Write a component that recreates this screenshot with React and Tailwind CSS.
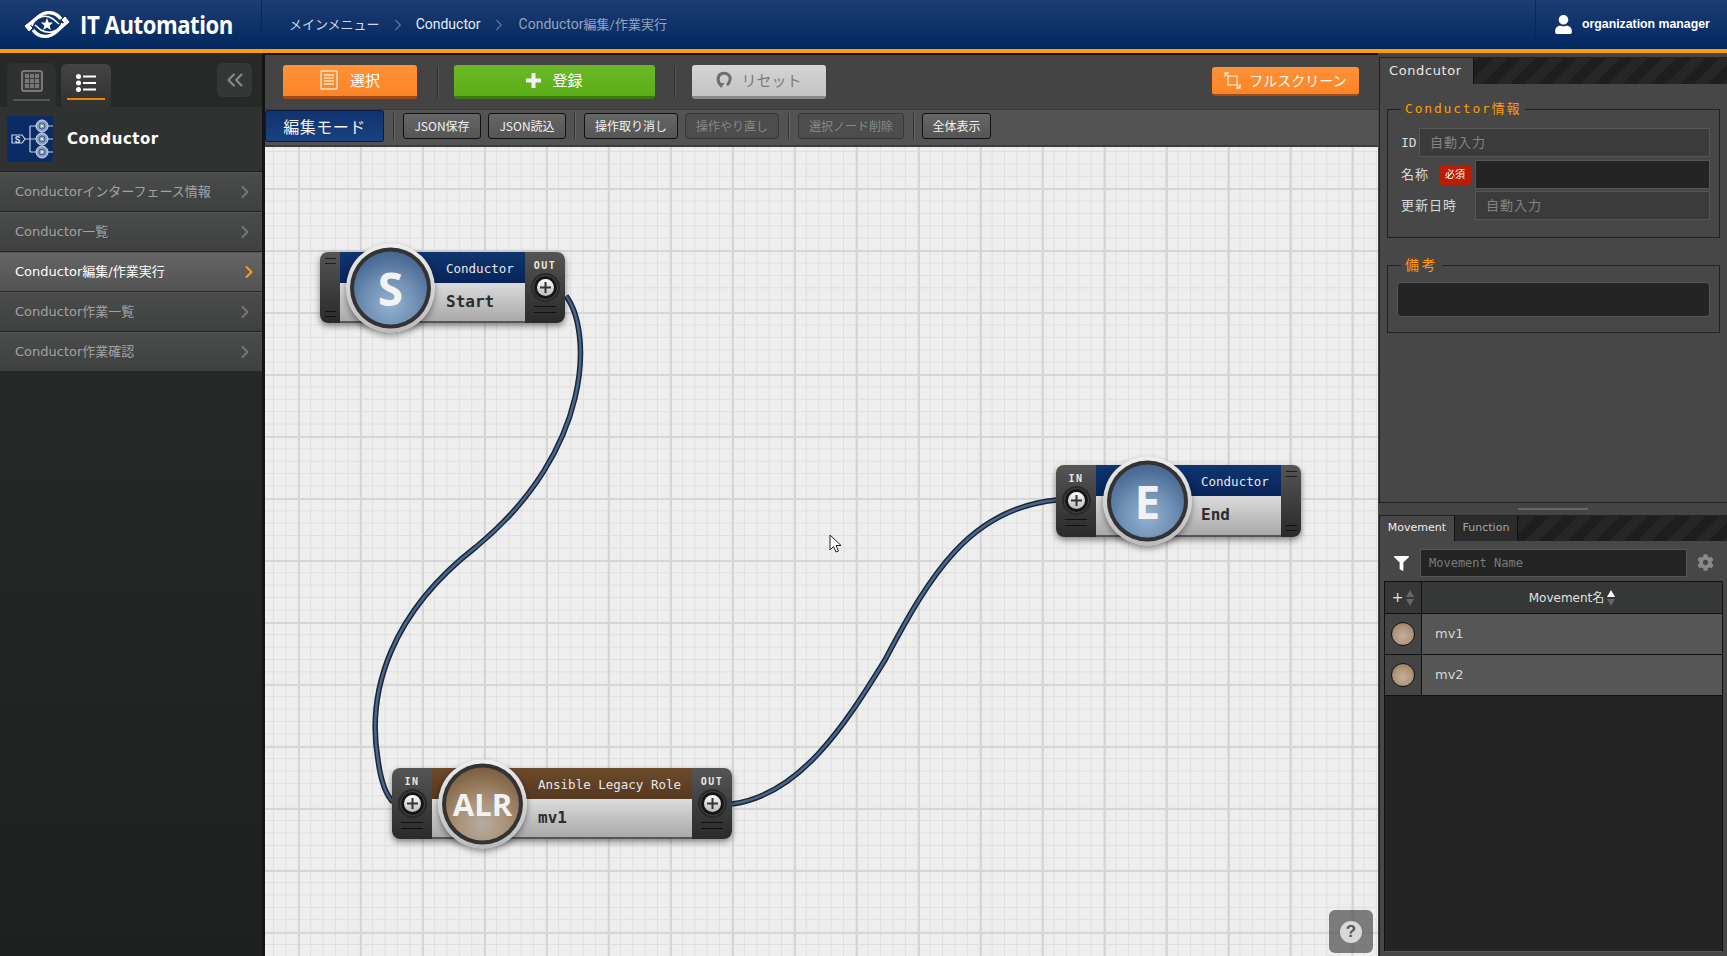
import { ChevronRight, ChevronsLeft } from 'lucide-react';
import { FaCog, FaFilter, FaUser } from 'react-icons/fa';

const sideMenu = [
  { label: 'Conductorインターフェース情報' },
  { label: 'Conductor一覧' },
  { label: 'Conductor編集/作業実行', active: true },
  { label: 'Conductor作業一覧' },
  { label: 'Conductor作業確認' },
];

function Logo() {
  return (
    <svg width="48" height="29" viewBox="0 0 48 29" fill="none" stroke="#fff" className="shrink-0">
      <path d="M3 17 L15 7 C23 0 33 2 38 9" strokeWidth="3.4" />
      <path d="M45 11 L33 22 C25 29 15 27 10 20" strokeWidth="3.4" />
      <path d="M9 16 C11 8 22 3 30 9 L36 14" strokeWidth="1.6" />
      <path d="M39 13 C37 21 26 25 18 20 L12 15" strokeWidth="1.6" />
      <path d="M2 16 L6 21 L9 18 L5 14 Z M46 12 L42 7 L39 10 L43 14 Z" fill="#fff" strokeWidth="1" />
      <polygon points="24,8 25.7,12.4 30,12.6 26.7,15.4 27.8,20 24,17.4 20.2,20 21.3,15.4 18,12.6 22.3,12.4" fill="#fff" stroke="none" />
    </svg>
  );
}

function ConductorIcon() {
  return (
    <svg width="46" height="46" viewBox="0 0 46 46" className="shrink-0">
      <rect width="46" height="46" fill="#0a2b66" />
      <g fill="none" stroke="#c6d3e4" strokeWidth="1.2">
        <path d="M5 19 h10 l3 4 l-3 4 h-10 z" />
        <path d="M18 23 h16 M23 10 v26 M23 10 h8 M23 36 h8 M40 10 h6 M40 23 h6 M40 36 h6" />
      </g>
      <text x="10.5" y="26.5" fontSize="9" fontWeight="700" fill="#dbe4f0" textAnchor="middle" fontFamily="Roboto, sans-serif">S</text>
      {[10, 23, 36].map((y) => (
        <g key={y}>
          <circle cx="35" cy={y} r="6" fill="#8ea3bf" stroke="#d5deea" strokeWidth="1" />
          <circle cx="35" cy={y} r="3" fill="none" stroke="#3e5a85" strokeWidth="1" />
          <circle cx="35" cy={y} r="1" fill="#fff" />
        </g>
      ))}
    </svg>
  );
}

function Sidebar() {
  return (
    <aside className="w-[262px] shrink-0 flex flex-col bg-gradient-to-b from-[#2b2c2c] to-[#1e1f1f]">
      <div className="h-[54px] relative flex items-end pl-[7px] gap-[5px] bg-[#272828]">
        <div className="w-[49px] h-[44px] rounded-t-md bg-[#2f3030] flex flex-col items-center pt-[7px]">
          <div className="w-[22px] h-[22px] rounded-[3px] border-2 border-[#777] bg-[#3c3c3c] grid grid-cols-3 gap-px p-[2px]">
            {[...Array(9)].map((_, i) => (
              <span key={i} className="bg-[#777]" />
            ))}
          </div>
          <div className="w-[37px] h-[2px] bg-[#555] mt-[7px]" />
        </div>
        <div className="w-[50px] h-[43px] rounded-t-md bg-gradient-to-b from-[#444] to-[#303131] flex flex-col items-center pt-[10px]">
          <svg width="20" height="18" viewBox="0 0 20 18" fill="#fff">
            <circle cx="2.5" cy="2.5" r="2.5" />
            <circle cx="2.5" cy="9" r="2.5" />
            <circle cx="2.5" cy="15.5" r="2.5" />
            <rect x="7" y="1.5" width="13" height="2" />
            <rect x="7" y="8" width="13" height="2" />
            <rect x="7" y="14.5" width="13" height="2" />
          </svg>
          <div className="w-[38px] h-[2px] bg-[#f08300] mt-[6px]" />
        </div>
        <div className="absolute left-[217px] top-[10px] w-[35px] h-[34px] rounded-md bg-[#353636] flex items-center justify-center">
          <ChevronsLeft className="w-[26px] h-[26px] text-[#8a8a8a]" strokeWidth={2} />
        </div>
      </div>
      <div className="h-[65px] flex items-center pl-[7px] gap-[14px] bg-[#303131] border-b border-[#1d1d1d]">
        <ConductorIcon />
        <span className="font-['DejaVu_Sans'] font-bold text-[15px] tracking-[0.5px] text-white">Conductor</span>
      </div>
      {sideMenu.map((m) => (
        <div
          key={m.label}
          className={`h-[40px] shrink-0 flex items-center justify-between pl-[15px] pr-[7px] border-b border-t border-b-[#262626] border-t-[#555] font-['DejaVu_Sans','Noto_Sans_CJK_JP',sans-serif] text-[13px] ${
            m.active
              ? 'bg-gradient-to-b from-[#666566] to-[#525252] text-white'
              : 'bg-gradient-to-b from-[#4a4b4b] to-[#3f4040] text-[#a3a3a3]'
          }`}
        >
          {m.label}
          <ChevronRight
            className={m.active ? 'w-[20px] h-[20px] -mr-[4px] text-[#ff9a1e]' : 'w-[20px] h-[20px] text-[#777]'}
            strokeWidth={2.4}
          />
        </div>
      ))}
    </aside>
  );
}

function ToolSep() {
  return <div className="w-px h-[32px] bg-[#2e2e2e] border-r border-[#555] box-content" />;
}

function SmallSep() {
  return <div className="w-px h-[26px] bg-[#333] border-r border-[#666] box-content" />;
}

function SmallBtn({ width, disabled, children }) {
  return (
    <button
      className={`${width} h-[26px] shrink-0 rounded-[3px] text-[12px] border ${
        disabled
          ? 'border-[#383838] bg-[#4d4d4d] text-[#888]'
          : 'border-[#111] bg-gradient-to-b from-[#666] to-[#555] text-[#f2f2f2]'
      }`}
    >
      {children}
    </button>
  );
}

function Toolbars() {
  return (
    <div className="font-['Noto_Sans_CJK_JP',sans-serif]">
      <div className="h-[54px] bg-[#444] flex items-center pl-[18px] pr-[19px] pb-px">
        <button className="w-[134px] h-[34px] rounded-[3px] bg-gradient-to-b from-[#ff9136] to-[#fb8526] border-b-[3px] border-[#a04c18] flex items-center justify-center gap-[12px] text-white text-[15px]">
          <svg width="18" height="20" viewBox="0 0 18 20" fill="none" stroke="#ffe6cf" strokeWidth="1.4">
            <rect x="1" y="1" width="16" height="18" rx="1" />
            <path d="M4 5 h10 M4 8 h10 M4 11 h10 M4 14 h10" />
          </svg>
          選択
        </button>
        <div className="ml-[20px] mr-[15px]"><ToolSep /></div>
        <button className="w-[201px] h-[34px] rounded-[3px] bg-gradient-to-b from-[#6bb826] to-[#5bae18] border-b-[3px] border-[#3b7a10] flex items-center justify-center gap-[11px] text-white text-[15px]">
          <svg width="15" height="15" viewBox="0 0 15 15" fill="#f2f2f2">
            <path d="M5.5 0h4v5.500H15v4H9.500V15h-4V9.500H0v-4h5.500z" />
          </svg>
          登録
        </button>
        <div className="ml-[19px] mr-[16px]"><ToolSep /></div>
        <button className="w-[134px] h-[34px] rounded-[3px] bg-gradient-to-b from-[#d4d4d4] to-[#c4c4c4] border-b-[3px] border-[#8a8a8a] flex items-center justify-center gap-[9px] text-[#7b7b7b] text-[15px]">
          <svg width="16" height="18" viewBox="0 0 16 18" fill="none" stroke="#6e6e6e" strokeWidth="3">
            <path d="M5 14 C1 11 1 4 6 2.5 C11 1 15 5 14 9 C13.5 11.5 12.5 13 11 14" />
            <path d="M1.5 12 h7 l-3.5 5z" fill="#6e6e6e" stroke="none" />
          </svg>
          リセット
        </button>
        <button className="ml-auto w-[147px] h-[29px] rounded-[3px] bg-gradient-to-b from-[#ff9136] to-[#fb8526] border-b-[2px] border-[#a04c18] flex items-center justify-center gap-[8px] text-white text-[14px]">
          <svg width="17" height="17" viewBox="0 0 17 17" fill="none" stroke="#ffe6cf" strokeWidth="1.3">
            <rect x="4" y="4" width="9" height="9" />
            <path d="M1 5 V1 H5 M1 1 L4 4 M16 12 V16 H12 M16 16 L13 13" />
          </svg>
          フルスクリーン
        </button>
      </div>
      <div className="h-[38px] bg-[#535353] border-t border-[#3a3a3a] border-b-2 border-b-[#3c3c3c] pb-[4px] flex items-center gap-[7px]">
        <div className="w-[119px] h-[32px] ml-0 rounded-[2px] border border-[#0b1c3d] bg-gradient-to-b from-[#0f336d] to-[#1a4280] text-[#f3f3f3] text-[16px] flex items-center justify-center tracking-[0.5px]">
          編集モード
        </div>
        <div className="ml-[2px] mr-px"><SmallSep /></div>
        <SmallBtn width="w-[78px]">JSON保存</SmallBtn>
        <SmallBtn width="w-[78px]">JSON読込</SmallBtn>
        <div className="mx-px"><SmallSep /></div>
        <SmallBtn width="w-[94px]">操作取り消し</SmallBtn>
        <SmallBtn width="w-[94px]" disabled>操作やり直し</SmallBtn>
        <div className="ml-[2px] mr-px"><SmallSep /></div>
        <SmallBtn width="w-[106px]" disabled>選択ノード削除</SmallBtn>
        <div className="ml-[2px]"><SmallSep /></div>
        <SmallBtn width="w-[69px]">全体表示</SmallBtn>
      </div>
    </div>
  );
}

function Terminal({ label }) {
  return (
    <div className="flex flex-col items-center">
      <span className="font-['DejaVu_Sans_Mono'] font-bold text-[10px] leading-[12px] tracking-[1.5px] text-[#f0e6d8] mb-[3px]">{label}</span>
      <div className="w-[25px] h-[25px] rounded-full bg-[#161616] border border-[#484848] shadow-[0_0_0_2px_#2a2a2a] flex items-center justify-center">
        <div className="w-[17px] h-[17px] rounded-full bg-gradient-to-b from-[#fff] to-[#bbb] flex items-center justify-center">
          <svg width="11" height="11" viewBox="0 0 11 11" fill="#333">
            <path d="M4.5 0h2v4.500h4.500v2H6.500V11h-2V6.500H0v-2h4.500z" />
          </svg>
        </div>
      </div>
      <div className="w-[22px] h-px bg-[#111] mt-[6px]" />
      <div className="w-[22px] h-px bg-[#111] mt-[5px]" />
    </div>
  );
}

function BlankCap({ side }) {
  return (
    <div className={`w-[20px] h-full bg-gradient-to-b from-[#555] to-[#2a2a2a] flex flex-col justify-between items-center py-[6px] ${side === 'left' ? 'rounded-l-lg' : 'rounded-r-lg'}`}>
      <div className="flex flex-col gap-[4px]">
        <div className="w-[11px] h-px bg-[#1c1c1c]" />
        <div className="w-[11px] h-px bg-[#1c1c1c]" />
      </div>
      <div className="flex flex-col gap-[4px]">
        <div className="w-[11px] h-px bg-[#111]" />
        <div className="w-[11px] h-px bg-[#111]" />
      </div>
    </div>
  );
}

function TermCap({ label, side }) {
  return (
    <div className={`w-[40px] h-full pt-[8px] bg-gradient-to-b from-[#555] to-[#2a2a2a] flex justify-center ${side === 'left' ? 'rounded-l-lg' : 'rounded-r-lg'}`}>
      <Terminal label={label} />
    </div>
  );
}

function Badge({ kind, text, bubbleLeft }) {
  const inner = kind === 'blue'
    ? 'bg-[radial-gradient(circle_at_50%_72%,#93b3d4_0%,#7090b4_40%,#4f7099_70%,#3a5a85_100%)]'
    : 'bg-[radial-gradient(circle_at_50%_78%,#b5aca0_0%,#ab9379_35%,#8c6f51_68%,#6a4c30_100%)]';
  return (
    <div
      className="absolute top-1/2 -translate-y-1/2 w-[89px] h-[89px] rounded-full bg-gradient-to-b from-[#eee] to-[#bbb] p-[4px] shadow-[0_3px_6px_rgba(0,0,0,0.4)]"
      style={{ left: bubbleLeft }}
    >
      <div className="w-full h-full rounded-full bg-[#333] p-[4px]">
        <div className={`w-full h-full rounded-full ${inner} flex items-center justify-center font-['Open_Sans'] font-bold text-[#f2f2f2] ${text.length > 1 ? 'text-[31px]' : 'text-[46px]'}`}>
          {text}
        </div>
      </div>
    </div>
  );
}

function Node({ left, top, width, height, head, title, name, text, bubbleLeft, textLeft, leftCap, rightCap }) {
  return (
    <div
      className="absolute flex rounded-lg shadow-[0_3px_6px_rgba(0,0,0,0.45)]"
      style={{ left, top, width, height }}
    >
      {leftCap}
      <div className="flex-1 flex flex-col font-['DejaVu_Sans_Mono']">
        <div className={`h-[31px] shrink-0 flex items-center pt-[3px] text-[12.500px] text-[#e8e8e8] ${head}`} style={{ paddingLeft: textLeft }}>
          {title}
        </div>
        <div className="flex-1 flex items-center pb-px bg-gradient-to-b from-[#dcdcdc] to-[#a9a9a9] border-b-2 border-[#555] text-[16px] font-bold text-[#2c2c2c]" style={{ paddingLeft: textLeft }}>
          {name}
        </div>
      </div>
      {rightCap}
      <Badge kind={head.includes('#5') ? 'brown' : 'blue'} text={text} bubbleLeft={bubbleLeft} />
    </div>
  );
}

function Canvas() {
  return (
    <div className="relative flex-1 overflow-hidden bg-[#eeeeee] bg-[image:linear-gradient(to_right,#d6d6d6_2px,transparent_2px),linear-gradient(to_bottom,#d6d6d6_2px,transparent_2px),linear-gradient(to_right,#dfdfdf_1px,transparent_1px),linear-gradient(to_bottom,#dfdfdf_1px,transparent_1px)] bg-[size:62px_62px,62px_62px,12.4px_12.4px,12.4px_12.4px] bg-[position:33px_0,0_41px,8px_0,0_4px]">
      <svg className="absolute left-0 top-0" width="1113" height="809" viewBox="265 147 1113 809" fill="none">
        {[
          'M566 296 C592 330 594 450 476 547 C392 612 366 690 378 760 C381 782 386 795 393 802',
          'M732 804 C800 795 845 725 885 660 C930 575 970 508 1057 500',
        ].map((d) => (
          <g key={d}>
            <path d={d} stroke="#1b2636" strokeWidth="5.500" />
            <path d={d} stroke="#47678f" strokeWidth="2.500" />
          </g>
        ))}
      </svg>

      <Node
        left={55}
        top={105}
        width={245}
        height={71}
        head="bg-gradient-to-b from-[#11356f] to-[#072459]"
        title="Conductor"
        name="Start"
        text="S"
        bubbleLeft={26}
        textLeft={106}
        leftCap={<BlankCap side="left" />}
        rightCap={<TermCap label="OUT" side="right" />}
      />
      <Node
        left={791}
        top={318}
        width={245}
        height={72}
        head="bg-gradient-to-b from-[#11356f] to-[#072459]"
        title="Conductor"
        name="End"
        text="E"
        bubbleLeft={47}
        textLeft={105}
        leftCap={<TermCap label="IN" side="left" />}
        rightCap={<BlankCap side="right" />}
      />
      <Node
        left={127}
        top={621}
        width={340}
        height={71}
        head="bg-gradient-to-b from-[#6d4a2b] to-[#553820]"
        title="Ansible Legacy Role"
        name="mv1"
        text="ALR"
        bubbleLeft={46}
        textLeft={106}
        leftCap={<TermCap label="IN" side="left" />}
        rightCap={<TermCap label="OUT" side="right" />}
      />

      <svg className="absolute left-[564px] top-[387px]" width="14" height="20" viewBox="0 0 14 20">
        <path d="M1 1 L1 16 L4.500 12.500 L7 18 L9.500 17 L7 11.500 L12 11.500 Z" fill="#fff" stroke="#222" strokeWidth="1" />
      </svg>

      <div className="absolute left-[1064px] top-[763px] w-[44px] h-[43px] rounded-md bg-[#555]/75 flex items-center justify-center">
        <div className="w-[22px] h-[22px] rounded-full bg-[#d8d8d8] flex items-center justify-center font-['Liberation_Sans'] font-bold text-[17px] text-[#555]">?</div>
      </div>
    </div>
  );
}

function TabStrip({ height, children }) {
  return (
    <div className={`${height} shrink-0 flex bg-[#222] bg-[image:repeating-linear-gradient(135deg,#262626_0,#262626_10px,#1e1e1e_10px,#1e1e1e_20px)]`}>
      {children}
    </div>
  );
}

function FieldInput({ placeholder }) {
  return (
    <input
      readOnly
      placeholder={placeholder}
      className="h-[29px] min-w-0 flex-1 px-[10px] text-[13px] tracking-[1px] border border-[#555] bg-[#3b3b3b] placeholder:text-[#848484] outline-none"
    />
  );
}

function ConductorPanel() {
  return (
    <div className="h-[445px] shrink-0 flex flex-col bg-[#474747] border-t border-l border-[#222] ml-px mt-[4px]">
      <TabStrip height="h-[26px]">
        <div className="w-[94px] bg-[#474747] text-[#e8e8e8] text-[13px] font-['DejaVu_Sans'] flex items-center pl-[9px] tracking-[0.6px] border-r border-[#111]">
          Condcutor
        </div>
      </TabStrip>
      <div className="pl-[7px] pr-[7px] font-['DejaVu_Sans_Mono','Noto_Sans_CJK_JP',monospace] text-[#dadada] text-[13px]">
        <fieldset className="border border-[#222] mt-[15px] h-[139px] pl-[13px] pr-[9px]">
          <legend className="px-[4px] text-[#ff9d00] text-[13px] tracking-[1.8px] leading-[20px]">Conductor情報</legend>
          <div className="flex items-center mt-[9px] gap-[5px]">
            <span className="w-[13px]">ID</span>
            <FieldInput placeholder="自動入力" />
          </div>
          <div className="flex items-center mt-[3px] h-[29px]">
            <span className="w-[38px] tracking-[1px]">名称</span>
            <span className="w-[32px] h-[20px] rounded-[3px] bg-[#b81d05] text-white text-[10px] flex items-center justify-center">必須</span>
            <input readOnly className="ml-[4px] min-w-0 flex-1 h-[29px] border border-[#555] bg-[#232423] outline-none" />
          </div>
          <div className="flex items-center mt-[2px]">
            <span className="w-[74px] shrink-0 tracking-[1px]">更新日時</span>
            <FieldInput placeholder="自動入力" />
          </div>
        </fieldset>
        <fieldset className="border border-[#222] mt-[17px] h-[78px] px-[9px]">
          <legend className="ml-[4px] px-[4px] text-[#ff9d00] text-[14px] tracking-[2.5px] leading-[20px]">備考</legend>
          <div className="h-[35px] mt-[7px] rounded-[4px] border border-[#555] bg-[#232423]" />
        </fieldset>
      </div>
    </div>
  );
}

function SortArrows({ up }) {
  return (
    <svg width="8" height="16" viewBox="0 0 8 16" className="shrink-0">
      <path d="M4 0 L8 7 H0 Z" fill={up ? '#fff' : '#666'} />
      <path d="M4 16 L8 9 H0 Z" fill="#666" />
    </svg>
  );
}

function MovementRow({ name }) {
  return (
    <div className="h-[41px] flex border-b border-[#111] text-[#d6d6d6] text-[13px] font-['DejaVu_Sans']">
      <div className="w-[37px] shrink-0 bg-[#444] border-r border-[#111] flex items-center justify-center">
        <div className="w-[24px] h-[24px] rounded-full border border-[#111] bg-[radial-gradient(circle_at_50%_60%,#c0b0a0_0%,#ae9378_55%,#8a6d50_100%)]" />
      </div>
      <div className="flex-1 flex items-center pl-[13px] bg-[#565656]">{name}</div>
    </div>
  );
}

function MovementPanel() {
  return (
    <div className="flex-1 min-h-0 flex flex-col bg-[#474747] border-t border-l border-[#222] ml-px">
      <TabStrip height="h-[25px]">
        <div className="w-[74px] bg-[#474747] text-[#eee] text-[11px] font-['DejaVu_Sans'] flex items-center justify-center">Movement</div>
        <div className="w-[64px] bg-[#2b2b2b] text-[#a5a5a5] text-[11px] font-['DejaVu_Sans'] flex items-center justify-center border-x border-[#111]">Function</div>
      </TabStrip>
      <div className="h-[40px] shrink-0 flex items-start pt-[8px] pl-[14px] pr-[8px]">
        <FaFilter className="w-[15px] h-[15px] mt-[7px] text-white mr-[11px]" />
        <input
          readOnly
          placeholder="Movement Name"
          className="w-[267px] h-[28px] px-[8px] border border-[#555] bg-[#232423] font-['DejaVu_Sans_Mono'] text-[12px] placeholder:text-[#7b7b7b] outline-none"
        />
        <FaCog className="ml-[10px] mt-[5px] w-[17px] h-[17px] text-[#8a8a8a]" />
      </div>
      <div className="flex-1 min-h-0 mx-[4px] mb-[4px] border border-[#111] border-b-[#555] bg-[#232423] flex flex-col">
        <div className="h-[32px] shrink-0 flex border-b border-[#111] bg-[#363737] text-[#e2e2e2] text-[12px] font-['DejaVu_Sans','Noto_Sans_CJK_JP',sans-serif]">
          <div className="w-[37px] shrink-0 border-r border-[#111] flex items-center justify-center gap-[3px] text-[14px]">
            + <SortArrows />
          </div>
          <div className="flex-1 flex items-center justify-center gap-[3px]">
            Movement名 <SortArrows up />
          </div>
        </div>
        <MovementRow name="mv1" />
        <MovementRow name="mv2" />
      </div>
    </div>
  );
}

export default function App() {
  return (
    <div className="w-[1727px] h-[956px] overflow-hidden flex flex-col bg-[#141414] font-['Roboto','Noto_Sans_CJK_JP',sans-serif]">
      <header className="h-[53px] shrink-0 flex items-stretch border-b-4 border-[#ff9d00] bg-gradient-to-b from-[#1c3d73] to-[#022760] text-white">
        <div className="w-[262px] shrink-0 border-r border-[#0c2750] flex items-center pl-[23px] gap-[9px]">
          <Logo />
          <span className="font-['Open_Sans'] font-bold text-[25px] tracking-[-0.5px] origin-left scale-x-[0.885] whitespace-nowrap">IT Automation</span>
        </div>
        <nav className="flex-1 flex items-center pl-[27px] text-[14px]">
          <span className="text-[13px] text-[#d5dce8]">メインメニュー</span>
          <ChevronRight className="w-[18px] h-[18px] mx-[9px] text-[#5c7699]" strokeWidth={1.6} />
          <span className="text-[#e8edf4]">Conductor</span>
          <ChevronRight className="w-[18px] h-[18px] ml-[9px] mr-[11px] text-[#5c7699]" strokeWidth={1.6} />
          <span className="text-[#93a5bf]">Conductor<span className="text-[13px]">編集/作業実行</span></span>
        </nav>
        <div className="w-[192px] shrink-0 border-l border-[#0c2750] flex items-center pl-[18px] gap-[9px]">
          <FaUser className="w-[19px] h-[19px]" />
          <span className="font-['Liberation_Sans'] font-bold text-[12.300px]">organization manager</span>
        </div>
      </header>
      <div className="flex-1 min-h-0 flex">
        <Sidebar />
        <main className="w-[1113px] shrink-0 ml-[3px] mt-[2px] flex flex-col min-h-0">
          <Toolbars />
          <Canvas />
        </main>
        <div className="flex-1 min-w-0 flex flex-col bg-[#444]">
          <ConductorPanel />
          <div className="h-[13px] shrink-0 flex items-center justify-center border-t border-[#222] bg-[#444]">
            <div className="w-[70px] h-[2px] bg-[#666]" />
          </div>
          <MovementPanel />
        </div>
      </div>
    </div>
  );
}
